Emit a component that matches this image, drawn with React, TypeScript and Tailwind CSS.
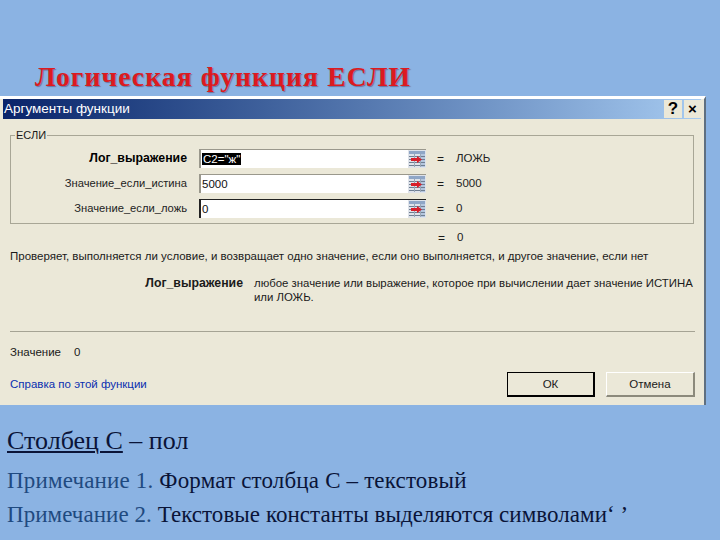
const sans = "font-['Liberation_Sans',Arial,sans-serif]";

function RefIcon() {
  return (
    <svg width="18" height="18" viewBox="0 0 18 18" className="shrink-0">
      <rect x="0" y="0" width="18" height="18" fill="#dfe3ea" />
      <rect x="1" y="1" width="16" height="3" fill="#8fa6c6" />
      <rect x="12" y="4" width="5" height="13" fill="#b4c6de" />
      <path d="M1 6.5h16M1 9.5h16M1 12.5h16M1 15.5h16" stroke="#6f7f93" strokeWidth="1" />
      <path d="M6.5 4v13M12.5 4v13" stroke="#9aa7b8" strokeWidth="1" />
      <path d="M3 8h6V6l5 3.5-5 3.5v-2H3z" fill="#d81e2a" />
    </svg>
  );
}

function ArgRow({ label, value, result, bold, selected, dark }: { label: string; value: string; result: string; bold?: boolean; selected?: boolean; dark?: boolean }) {
  return (
    <div className="flex items-center h-[19px]">
      <div className={`w-[176px] shrink-0 text-right ${bold ? 'text-[12.3px] font-bold text-black' : 'text-[11.2px] text-[#222]'}`}>{label}</div>
      <div className={`ml-[12px] w-[227px] h-[19px] flex items-center bg-white border-l-2 border-t ${dark ? 'border-[#222]' : 'border-[#9a988c]'} pl-[1px]`}>
        <span className={`flex-1 text-[11.5px] leading-[14px] ${selected ? '' : 'text-[#111]'}`}>
          <span className={selected ? 'bg-black text-white px-[1px]' : ''}>{value}</span>
        </span>
        <RefIcon />
      </div>
      <span className="ml-[11px] w-[19px] text-[12px]">=</span>
      <span className="text-[11.5px] text-[#222]">{result}</span>
    </div>
  );
}

export default function App() {
  return (
    <div className="w-[720px] h-[540px] overflow-hidden bg-[#8bb3e3] flex flex-col">
      <h1 className="h-[96px] pt-[60px] pl-[35px] font-['Liberation_Serif',serif] font-bold text-[27.5px] leading-[34px] tracking-[1.15px] text-[#dc1a20] [text-shadow:1px_1px_1px_rgba(90,70,110,0.6)]">
        Логическая функция ЕСЛИ
      </h1>

      <div className={`w-[706px] h-[309px] shrink-0 bg-[#ebe8d8] border-t-[3px] border-t-white border-r-[2px] border-r-[#5f6f80] flex flex-col text-[#1a1a1a] ${sans}`}>
        <div className="mx-[3px] h-[20px] shrink-0 flex items-center justify-between bg-gradient-to-r from-[#0a246a] to-[#a6caf0] pl-[1px] pr-[0px]">
          <span className="text-white text-[13.5px]">Аргументы функции</span>
          <div className="flex gap-[2px]">
            <div className="w-[18px] h-[18px] bg-[#ebe8d8] flex items-center justify-center font-bold text-[17px] text-black">?</div>
            <div className="w-[17px] h-[18px] bg-[#ebe8d8] flex items-center justify-center font-bold text-[15px] text-black">×</div>
          </div>
        </div>

        <div className="relative mt-[16px] ml-[10px] w-[684px] h-[89px] shrink-0 border border-[#a8a696] pt-[13px] flex flex-col gap-[6px]">
          <span className="absolute -top-[8px] left-[4px] bg-[#ebe8d8] px-[1px] text-[11px] leading-[14px]">ЕСЛИ</span>
          <ArgRow label="Лог_выражение" value={'С2="ж"'} result="ЛОЖЬ" bold selected />
          <ArgRow label="Значение_если_истина" value="5000" result="5000" />
          <ArgRow label="Значение_если_ложь" value="0" result="0" dark />
        </div>

        <div className="mt-[7px] h-[14px] pl-[438px] flex items-center text-[11.5px]">
          <span className="w-[19px] text-[12px]">=</span>
          <span>0</span>
        </div>
        <div className="mt-[4px] pl-[10px] h-[14px] text-[11.5px] leading-[14px] whitespace-nowrap">
          Проверяет, выполняется ли условие, и возвращает одно значение, если оно выполняется, и другое значение, если нет
        </div>
        <div className="mt-[13px] flex text-[11.4px] leading-[14px]">
          <div className="w-[243px] shrink-0 text-right font-bold text-[12.3px]">Лог_выражение</div>
          <div className="ml-[11px] w-[445px]">любое значение или выражение, которое при вычислении дает значение ИСТИНА или ЛОЖЬ.</div>
        </div>
        <div className="mt-[27px] ml-[10px] mr-[9px] h-[1px] shrink-0 bg-[#a5a394]" />
        <div className="mt-[13px] pl-[10px] flex flex-col text-[11.5px] leading-[14px] relative">
          <div className="flex"><span className="w-[64px]">Значение</span><span>0</span></div>
          <div className="mt-[18px] flex items-center justify-between">
            <span className="text-[#0a2fb0]">Справка по этой функции</span>
          </div>
          <div className="absolute right-[9px] top-[27px] flex gap-[11px]">
            <div className="w-[88px] h-[25px] bg-[#ebe8d8] border border-black border-b-2 border-r-2 flex items-center justify-center">ОК</div>
            <div className="w-[89px] h-[25px] bg-[#ebe8d8] border border-white border-b-2 border-r-2 border-r-[#8c8a7c] border-b-[#8c8a7c] flex items-center justify-center">Отмена</div>
          </div>
        </div>
      </div>

      <div className="pl-[7px] pt-[19px] font-['Liberation_Serif',serif] text-[23px] tracking-[0.17px] leading-[34px] text-[#0a1438]">
        <div className="text-[26px] tracking-normal"><span className="underline decoration-2 underline-offset-2">Столбец С</span> – пол</div>
        <div className="mt-[6px]"><span className="text-[#1f4a80]">Примечание 1.</span> Формат столбца С – текстовый</div>
        <div className="tracking-[0.05px]"><span className="text-[#1f4a80]">Примечание 2.</span> Текстовые константы выделяются символами‘ ’</div>
      </div>
    </div>
  );
}
